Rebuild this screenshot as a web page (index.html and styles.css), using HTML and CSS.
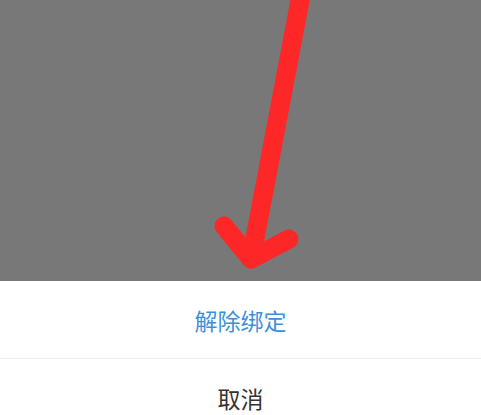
FILE: index.html
```html
<!DOCTYPE html>
<html lang="zh">
<head>
<meta charset="utf-8">
<link rel="stylesheet" href="styles.css">
</head>
<body>
<div class="screen">
  <div class="mask">
    <svg class="arrow" width="481" height="281" viewBox="0 0 481 281">
      <g stroke="#fe2727" stroke-width="19" stroke-linecap="round" stroke-linejoin="round" fill="none">
        <line x1="302" y1="-10" x2="251" y2="259"/>
        <polyline points="224,226 251,259 289,239"/>
      </g>
    </svg>
  </div>
  <div class="sheet">
    <div class="item primary">解除绑定</div>
    <div class="divider"></div>
    <div class="item">取消</div>
  </div>
</div>
</body>
</html>
```
FILE: styles.css
```css
html, body {
  margin: 0;
  padding: 0;
  background: #ffffff;
}
.screen {
  width: 481px;
  height: 415px;
  overflow: hidden;
  display: flex;
  flex-direction: column;
  font-family: "Noto Sans CJK SC", "Noto Sans", sans-serif;
}
.mask {
  position: relative;
  height: 281px;
  flex: none;
  background: #777877;
}
.arrow {
  position: absolute;
  left: 0;
  top: 0;
}
.sheet {
  display: flex;
  flex-direction: column;
  background: #ffffff;
}
.item {
  height: 77px;
  display: flex;
  align-items: center;
  justify-content: center;
  font-size: 23px;
  color: #333333;
  flex: none;
}
.item.primary {
  color: #3d8fdc;
}
.divider {
  height: 1px;
  background: #ededed;
  flex: none;
}
```
